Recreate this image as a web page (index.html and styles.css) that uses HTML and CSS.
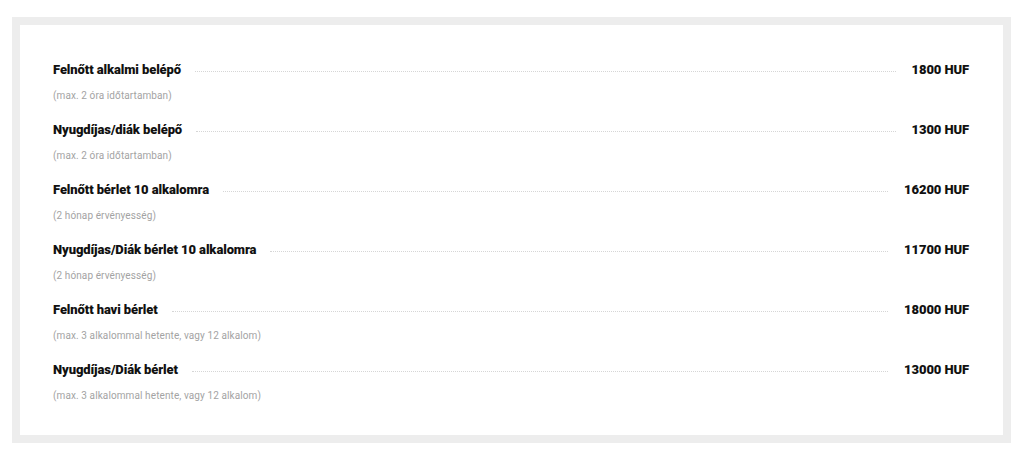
FILE: index.html
```html
<!DOCTYPE html>
<html lang="hu">
<head>
<meta charset="utf-8">
<link rel="stylesheet" href="styles.css">
</head>
<body>
<div class="frame">
  <ul class="prices">
    <li class="item">
      <div class="row"><span class="name">Felnőtt alkalmi belépő</span><span class="dots"></span><span class="price">1800 HUF</span></div>
      <div class="note">(max. 2 óra időtartamban)</div>
    </li>
    <li class="item">
      <div class="row"><span class="name">Nyugdíjas/diák belépő</span><span class="dots"></span><span class="price">1300 HUF</span></div>
      <div class="note">(max. 2 óra időtartamban)</div>
    </li>
    <li class="item">
      <div class="row"><span class="name">Felnőtt bérlet 10 alkalomra</span><span class="dots"></span><span class="price">16200 HUF</span></div>
      <div class="note">(2 hónap érvényesség)</div>
    </li>
    <li class="item">
      <div class="row"><span class="name">Nyugdíjas/Diák bérlet 10 alkalomra</span><span class="dots"></span><span class="price">11700 HUF</span></div>
      <div class="note">(2 hónap érvényesség)</div>
    </li>
    <li class="item">
      <div class="row"><span class="name">Felnőtt havi bérlet</span><span class="dots"></span><span class="price">18000 HUF</span></div>
      <div class="note">(max. 3 alkalommal hetente, vagy 12 alkalom)</div>
    </li>
    <li class="item">
      <div class="row"><span class="name">Nyugdíjas/Diák bérlet</span><span class="dots"></span><span class="price">13000 HUF</span></div>
      <div class="note">(max. 3 alkalommal hetente, vagy 12 alkalom)</div>
    </li>
  </ul>
</div>
</body>
</html>
```

FILE: styles.css
```css
html, body {
  margin: 0;
  padding: 0;
  background: #fff;
}
body {
  font-family: "Roboto", "Liberation Sans", sans-serif;
  color: #111;
  padding: 17px 13px 0 12px;
}
.frame {
  border: 8px solid #ededed;
  padding: 35px 34px 29px 33px;
}
.prices {
  list-style: none;
  margin: 0;
  padding: 0;
  display: flex;
  flex-direction: column;
  gap: 14px;
}
.item {
  display: flex;
  flex-direction: column;
  gap: 6px;
}
.row {
  display: flex;
  align-items: center;
  height: 20px;
}
.name, .price {
  font-size: 13px;
  font-weight: 900;
  line-height: 20px;
  letter-spacing: -0.1px;
  white-space: nowrap;
}
.dots {
  flex: 1;
  border-bottom: 1px dotted #d6d6d6;
  margin: 3px 16px 0 14px;
}
.note {
  font-size: 10px;
  line-height: 20px;
  letter-spacing: 0.1px;
  color: #a3a3a3;
}
```
